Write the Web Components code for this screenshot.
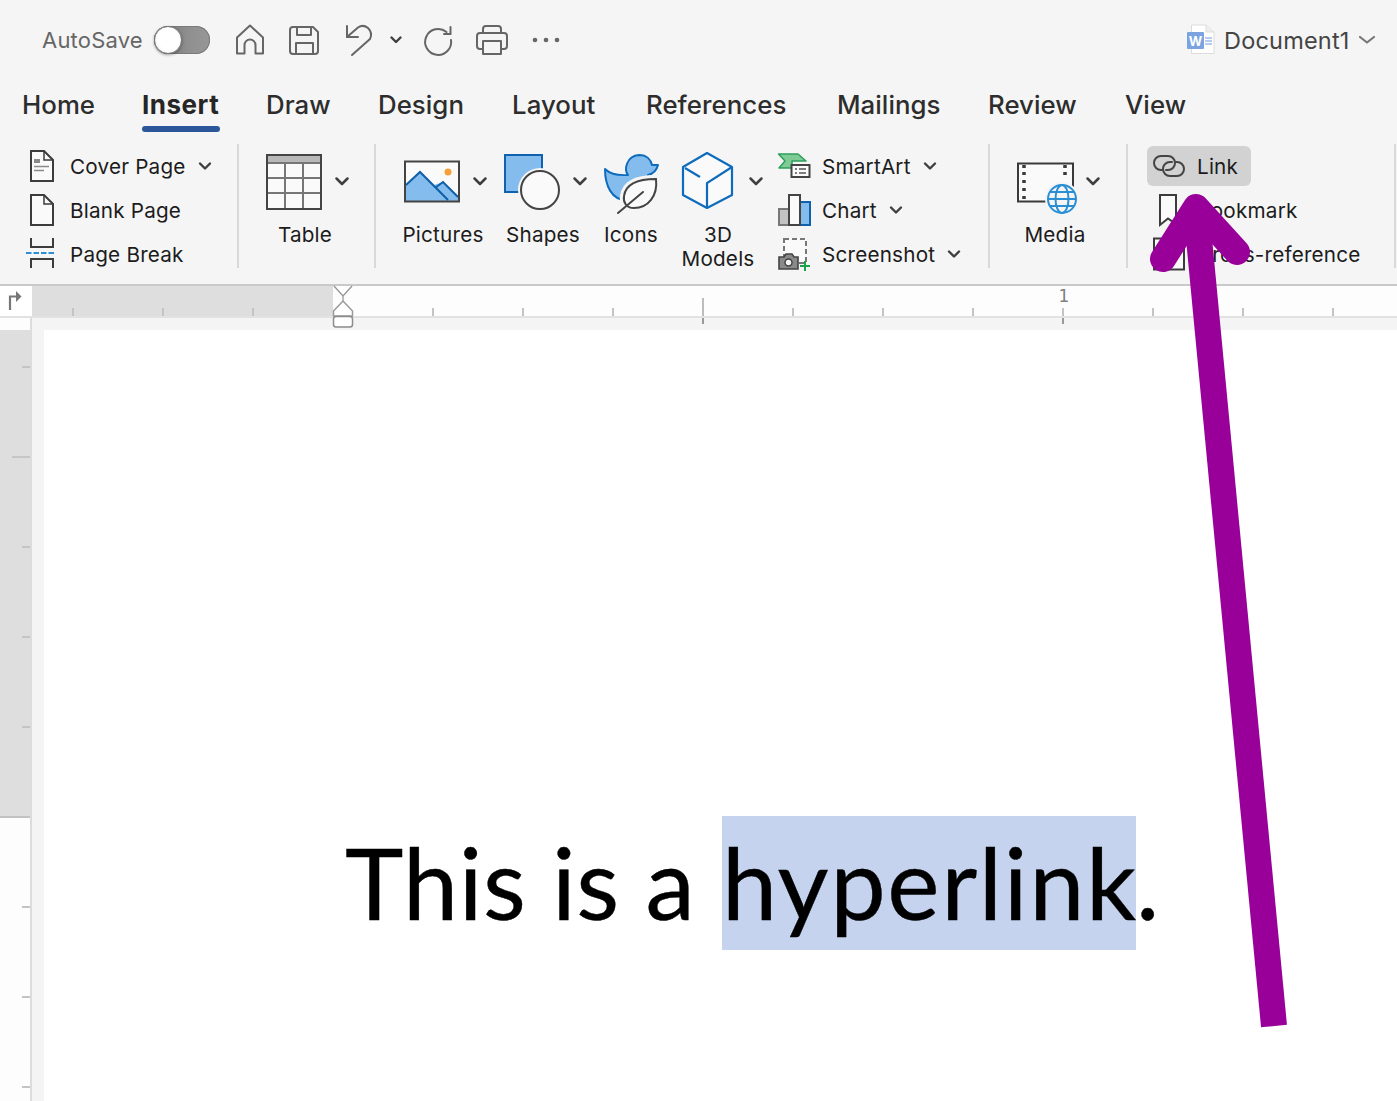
<!DOCTYPE html>
<html><head><meta charset="utf-8">
<style>
html,body{margin:0;padding:0;background:#fff}
body{width:1397px;height:1101px;overflow:hidden;position:relative;font-family:Inter,"Liberation Sans",sans-serif}
</style></head><body>
<word-app>
  <title-bar></title-bar>
  <tab-strip>
    <tab-item style="width:120px">Home</tab-item>
    <tab-item active style="width:124px">Insert</tab-item>
    <tab-item style="width:112px">Draw</tab-item>
    <tab-item style="width:134px">Design</tab-item>
    <tab-item style="width:134px">Layout</tab-item>
    <tab-item style="width:191px">References</tab-item>
    <tab-item style="width:151px">Mailings</tab-item>
    <tab-item style="width:137px">Review</tab-item>
    <tab-item style="width:80px">View</tab-item>
  </tab-strip>
  <ribbon-bar>
    <ribbon-group style="width:239px;padding-left:26px">
      <small-col>
        <small-item icon="cover" chev>Cover Page</small-item>
        <small-item icon="blank">Blank Page</small-item>
        <small-item icon="pagebreak">Page Break</small-item>
      </small-col>
    </ribbon-group>
    <ribbon-group style="width:137px;padding-left:21px">
      <large-btn icon="table" iw="56" w="90" ipl="6" cm="12" chev>Table</large-btn>
    </ribbon-group>
    <ribbon-group style="width:614px;padding-left:22px">
      <large-btn icon="pictures" iw="56" w="90" ipl="6" cm="12" chev>Pictures</large-btn>
      <large-btn icon="shapes" iw="56" w="90" ipl="6" cm="12" chev style="margin-left:10px">Shapes</large-btn>
      <large-btn icon="icons" iw="56" w="66" ipl="6" style="margin-left:10px">Icons</large-btn>
      <large-btn icon="model" iw="56" w="92" ipl="8" cm="12" chev style="margin-left:8px">3D Models</large-btn>
      <small-col style="margin-left:14px">
        <small-item icon="smartart" iw="32" chev>SmartArt</small-item>
        <small-item icon="chart" iw="32" chev>Chart</small-item>
        <small-item icon="screenshot" iw="32" chev>Screenshot</small-item>
      </small-col>
    </ribbon-group>
    <ribbon-group style="width:138px;padding-left:19px">
      <large-btn icon="media" iw="60" w="92" ipl="8" cm="8" chev>Media</large-btn>
    </ribbon-group>
    <ribbon-group style="width:268px;padding-left:19px">
      <small-col>
        <small-item icon="link" iw="32" active>Link</small-item>
        <small-item icon="bookmark" iw="32" pad>Bookmark</small-item>
        <small-item icon="xref" iw="32" pad>Cross-reference</small-item>
      </small-col>
    </ribbon-group>
  </ribbon-bar>
  <top-ruler></top-ruler>
  <doc-view></doc-view>
</word-app>
<pointer-arrow></pointer-arrow>
<script>
const S='stroke-linecap="round" stroke-linejoin="round"';
const ICONS={
home:[32,32,`<path d="M3 29.5V13.5L16 1.5L29 13.5V29.5H21.5V21a5.5 5.5 0 0 0-11 0V29.5Z" fill="none" stroke="#666" stroke-width="2" ${S}/>`],
save:[32,32,`<g fill="none" stroke="#666" stroke-width="2" ${S}><path d="M5 3H25L30 8V27a3 3 0 0 1-3 3H5a3 3 0 0 1-3-3V6a3 3 0 0 1 3-3Z"/><path d="M9 3V11H23V3"/><path d="M8 30V19H25V30"/></g>`],
undo:[30,32,`<g fill="none" stroke="#666" stroke-width="2" ${S}><path d="M3 2V13H14"/><path d="M3 13L14 3.5Q19 0 24 4Q29 9 26 15L8 31"/></g>`],
chev:[14,32,`<path d="M2.5 13.5L7 18L11.5 13.5" fill="none" stroke="#3f3f3f" stroke-width="2.4" ${S}/>`],
redo:[32,32,`<g fill="none" stroke="#666" stroke-width="2" ${S}><path d="M24.500 8A13 13 0 1 0 29 16"/><path d="M28.500 3V10H22"/></g>`],
print:[34,32,`<g fill="none" stroke="#666" stroke-width="2" ${S}><path d="M8 9V5a3 3 0 0 1 3-3H23a3 3 0 0 1 3 3V9"/><path d="M8 25H5a3 3 0 0 1-3-3V12a3 3 0 0 1 3-3H29a3 3 0 0 1 3 3V22a3 3 0 0 1-3 3H26"/><path d="M8 30V17H26V30Z"/></g>`],
dots:[28,32,`<g fill="#666"><circle cx="3" cy="16" r="2.300"/><circle cx="14" cy="16" r="2.300"/><circle cx="25" cy="16" r="2.300"/></g>`],
word:[30,32,`<path d="M5.500 1H20L28 8V29.500H5.500Z" fill="#fff" stroke="#dcdcdc"/><path d="M20 1V8H28" fill="#eee" stroke="#dcdcdc"/><rect x="1" y="8" width="17" height="17" rx="1" fill="#7ba3df"/><text x="9.500" y="21.500" font-family="Inter,Liberation Sans,sans-serif" font-size="13" font-weight="700" fill="#fff" text-anchor="middle">W</text><path d="M19 14h7M19 17h7M19 20h7" stroke="#6d9ce0" stroke-width="1.200"/>`],
docchev:[18,32,`<path d="M2 13L9 18.500L16 13" fill="none" stroke="#777" stroke-width="2.200" ${S}/>`],
bigchev:[16,66,`<path d="M2.500 28.500L8 34L13.500 28.500" fill="none" stroke="#3f3f3f" stroke-width="2.500" ${S}/>`],
smallchev:[14,36,`<path d="M2 15.500L7 20.500L12 15.500" fill="none" stroke="#3f3f3f" stroke-width="2.400" ${S}/>`],
cover:[30,36,`<path d="M5 3H18L27 12V33H5Z" fill="#fafafa" stroke="#3c3c3c" stroke-width="2"/><path d="M18 3V12H27" fill="none" stroke="#3c3c3c" stroke-width="1.500"/><path d="M8 11h6v4H8z" fill="#8a8a8a"/><path d="M8 18.500H23M8 22.500H18" stroke="#8a8a8a" stroke-width="1.600"/>`],
blank:[30,36,`<path d="M5 3H18L27 12V33H5Z" fill="#fafafa" stroke="#3c3c3c" stroke-width="2"/><path d="M18 3V12H27" fill="none" stroke="#3c3c3c" stroke-width="1.500"/>`],
pagebreak:[30,36,`<path d="M5 2V11H27V2M5 32V23H27V32" fill="none" stroke="#3c3c3c" stroke-width="2"/><path d="M0 17H30" stroke="#2b8fd6" stroke-width="2" stroke-dasharray="5.500 2"/>`],
table:[56,66,`<rect x="1" y="5" width="54" height="54" fill="#fafafa"/><rect x="1" y="5" width="54" height="8" fill="#b8b8b8"/><path d="M1 13H55M1 28H55M1 43H55M19 13V59M37 13V59" stroke="#777" stroke-width="2" fill="none"/><rect x="1" y="5" width="54" height="54" fill="none" stroke="#444" stroke-width="2"/>`],
pictures:[56,66,`<rect x="1" y="11.500" width="54" height="40" fill="#fafafa"/><path d="M2 35L16 22L30 35L39 32L54 47V51H2Z" fill="#83bced"/><path d="M2 35L16 22L44 50M31 38L39 32L54 47" fill="none" stroke="#0f5fa8" stroke-width="2"/><circle cx="44" cy="22" r="3.500" fill="#f6a03c"/><rect x="1" y="11.500" width="54" height="40" fill="none" stroke="#444" stroke-width="2"/>`],
shapes:[56,66,`<rect x="1" y="5" width="37" height="37" fill="#83bced" stroke="#0f62ae" stroke-width="2"/><circle cx="36" cy="40" r="22" fill="#f5f5f5"/><circle cx="36" cy="40" r="19" fill="#fafafa" stroke="#444" stroke-width="2"/>`],
icons:[56,66,`<path d="M1 19Q8 26 24 25C20 20 22 6 35 5C43 5 47 10 48 15L54 15Q52 23 44 25C46 40 35 50 22 50C8 50 1 36 1 19Z" fill="#83bced" stroke="#0f6cbd" stroke-width="2" stroke-linejoin="round"/><path d="M52 29C38 29 22 32 20 46C19 52 22 58 30 58C44 58 54 46 52 29Z" fill="#f5f5f5" stroke="#f5f5f5" stroke-width="8"/><path d="M52 29C38 29 22 32 20 46C19 52 22 58 30 58C44 58 54 46 52 29Z" fill="#fafafa" stroke="#444" stroke-width="2"/><path d="M14 63L39 42" stroke="#444" stroke-width="2" ${S}/>`],
model:[56,66,`<path d="M27 3L52 17V45L27 58L3 45V17Z" fill="#fafafa" stroke="#0f6cbd" stroke-width="2.200" stroke-linejoin="round"/><path d="M52 17L27 33V58M5 18L20 27" fill="none" stroke="#0f6cbd" stroke-width="2.200"/>`],
smartart:[32,36,`<path d="M0.500 6H20L28 13H14V20H1L7 13Z" fill="#7fcb96" stroke="#2e9e5b" stroke-width="1.500" stroke-linejoin="round"/><rect x="13.500" y="17" width="18" height="12" fill="#fafafa" stroke="#444" stroke-width="2"/><path d="M17 21h2M21 21h7M17 25h2M21 25h7" stroke="#555" stroke-width="1.500"/>`],
chart:[32,36,`<rect x="1" y="17" width="10" height="16" fill="#c2c2c2" stroke="#777" stroke-width="2"/><rect x="22" y="10" width="10" height="23" fill="#83bced" stroke="#0f62ae" stroke-width="2"/><rect x="11" y="3" width="11" height="30" fill="#fafafa" stroke="#444" stroke-width="2"/>`],
screenshot:[32,36,`<rect x="6" y="3" width="22" height="24" fill="#fafafa" stroke="#777" stroke-width="2" stroke-dasharray="5 3"/><path d="M1 21H6L8 18H14L16 21H20V33H1Z" fill="#8a8a8a" stroke="#444" stroke-width="1.600"/><circle cx="10.500" cy="26.500" r="3.500" fill="#f5f5f5" stroke="#444" stroke-width="1.500"/><path d="M22 30H32M27 25V35" stroke="#1ba34a" stroke-width="2"/>`],
media:[60,66,`<rect x="1" y="13.500" width="55" height="38" fill="#fafafa" stroke="#3a3a3a" stroke-width="2"/><path d="M7 15v3M7 22v3M7 30v3M7 38v3M7 46v3M48 15v3M48 22v3" stroke="#3a3a3a" stroke-width="3.500"/><circle cx="45" cy="49" r="17" fill="#f5f5f5"/><g fill="none" stroke="#2b8fd6" stroke-width="2"><circle cx="45" cy="49" r="14"/><ellipse cx="45" cy="49" rx="6.500" ry="14"/><path d="M31 49H59M33 42H57M33 56H57"/></g>`],
link:[32,36,`<g fill="none" stroke="#444" stroke-width="2" ${S}><path d="M9 22H8A7 7 0 0 1 8 8H15A7 7 0 0 1 15 22H13"/><path d="M23 14H24A7 7 0 0 1 24 28H17A7 7 0 0 1 17 14H19"/></g>`],
bookmark:[32,36,`<path d="M7 3H23V32L15 26.500L7 33Z" fill="#fafafa" stroke="#3c3c3c" stroke-width="2"/>`],
xref:[32,36,`<rect x="1" y="2.500" width="30" height="31" fill="#fafafa" stroke="#3c3c3c" stroke-width="2"/>`]
};
function def(name,html){
  customElements.define(name,class extends HTMLElement{
    constructor(){super();this.attachShadow({mode:'open'});}
    connectedCallback(){
      if(this._done)return;this._done=true;
      this.shadowRoot.innerHTML=typeof html==='function'?html(this):html;
    }
  });
}
function svg(n){const i=ICONS[n];return `<svg xmlns="http://www.w3.org/2000/svg" width="${i[0]}" height="${i[1]}" viewBox="0 0 ${i[0]} ${i[1]}" style="display:block;flex:none;overflow:visible">${i[2]}</svg>`;}
def('rb-icon',el=>`<style>:host{display:block;flex:none}</style>${svg(el.getAttribute('name'))}`);

def('word-app',`<style>:host{display:flex;flex-direction:column;width:1397px;height:1101px;overflow:hidden;background:#fff}</style><slot></slot>`);

def('toggle-switch',`<style>
:host{display:block;flex:none;width:56px;height:28px;position:relative;border-radius:14px;background:linear-gradient(90deg,#6c6c6c,#8f8f8f 60%,#979797);box-shadow:inset 0 0 0 1px #7a7a7a}
i{position:absolute;left:0;top:0;width:28px;height:28px;box-sizing:border-box;border-radius:50%;background:radial-gradient(circle at 60% 45%,#fff 55%,#ececec);border:1px solid #777;box-shadow:0 1px 3px rgba(0,0,0,.35)}
</style><i></i>`);

def('title-bar',`<style>
:host{display:flex;align-items:center;height:80px;padding-left:42px;box-sizing:border-box;background:#f5f5f5;flex:none}
.as{width:112px;font-size:22px;color:#666;font-weight:400;white-space:nowrap;flex:none;letter-spacing:.2px}
.doc{font-size:23.5px;color:#444;width:134px;flex:none;margin-left:8px;white-space:nowrap;letter-spacing:.2px}
.push{flex:1}
</style>
<span class="as">AutoSave</span><toggle-switch></toggle-switch>
<rb-icon name="home" style="margin-left:24px"></rb-icon>
<rb-icon name="save" style="margin-left:22px"></rb-icon>
<rb-icon name="undo" style="margin-left:24px"></rb-icon>
<rb-icon name="chev" style="margin-left:15px"></rb-icon>
<rb-icon name="redo" style="margin-left:19px"></rb-icon>
<rb-icon name="print" style="margin-left:21px"></rb-icon>
<rb-icon name="dots" style="margin-left:23px"></rb-icon>
<span class="push"></span>
<rb-icon name="word"></rb-icon><span class="doc">Document1</span><rb-icon name="docchev" style="margin-right:21px"></rb-icon>`);

def('tab-strip',`<style>:host{display:flex;height:52px;padding-left:22px;background:#f5f5f5;flex:none;box-sizing:border-box}</style><slot></slot>`);
def('tab-item',el=>`<style>
:host{display:block;position:relative;height:52px;line-height:50px;font-size:25.800px;font-weight:500;color:#2d2d2d;white-space:nowrap;flex:none;letter-spacing:.05px}
:host([active]){font-weight:700;color:#262626;font-size:26px;letter-spacing:.5px}
.u{position:absolute;left:0;top:46px;width:78px;height:6px;border-radius:3px;background:#2b579a}
</style><slot></slot>${el.hasAttribute('active')?'<span class="u"></span>':''}`);

def('ribbon-bar',`<style>:host{display:flex;height:154px;padding-top:12px;box-sizing:border-box;background:#f5f5f5;border-bottom:2px solid #c9c9c9;flex:none}</style><slot></slot>`);
def('ribbon-group',`<style>:host{display:flex;flex:none;box-sizing:border-box;height:124px;border-right:2px solid #d9d9d9}</style><slot></slot>`);
def('small-col',`<style>:host{display:flex;flex-direction:column;flex:none}</style><slot></slot>`);
def('small-item',el=>{
  const a=el.hasAttribute('active'),iw=el.getAttribute('iw');
  return `<style>
:host{display:flex;height:44px;align-items:center;flex:none;font-size:20.700px;color:#1c1c1c;white-space:nowrap;letter-spacing:.2px}
.b{display:flex;align-items:center;height:40px;box-sizing:border-box}
.b.act{background:#d2d2d2;border-radius:6px;padding:0 13px 0 6px}
.b.pad{padding-left:6px}
.t{margin-left:${iw?12:14}px}
.c{margin-left:12px}
</style><div class="b ${a?'act':''} ${el.hasAttribute('pad')?'pad':''}">${svg(el.getAttribute('icon'))}<span class="t"><slot></slot></span>${el.hasAttribute('chev')?'<span class="c">'+svg('smallchev')+'</span>':''}</div>`});
def('large-btn',el=>`<style>
:host{display:block;flex:none;width:${el.getAttribute('w')}px;font-size:20.700px;color:#1c1c1c;letter-spacing:.2px}
.i{display:flex;height:66px;margin-top:6px;padding-left:${el.getAttribute('ipl')}px}
.c{margin-left:${el.getAttribute('cm')||0}px}
.l{margin-top:7px;line-height:24px;text-align:center}
</style><div class="i">${svg(el.getAttribute('icon'))}${el.hasAttribute('chev')?'<span class="c">'+svg('bigchev')+'</span>':''}</div><div class="l"><slot></slot></div>`);

def('top-ruler',`<style>
:host{display:flex;height:32px;flex:none;position:relative;z-index:2;background:#fff}
.corner{width:32px;flex:none;display:flex;align-items:flex-start;padding:4px 0 0 8px;box-sizing:border-box;border-bottom:2px solid #e2e2e2}
.track{flex:1;box-sizing:border-box;border-bottom:2px solid #e2e2e2;padding-top:22px;background:linear-gradient(90deg,#dedede 301px,#fdfdfd 301px)}
.ticks{height:8px;background:repeating-linear-gradient(90deg,transparent 0 40px,#c4c4c4 40px 42px,transparent 42px 90px)}
.big{position:absolute;left:702px;top:12px;width:2px;height:18px;background:#bdbdbd}
.one{position:absolute;left:1058px;top:0;width:12px;text-align:center;font:17px/20px "DejaVu Sans",sans-serif;color:#808080}
svg.m{position:absolute;left:332px;top:0;overflow:visible}
</style>
<div class="corner"><svg width="14" height="20" viewBox="0 0 14 20"><path d="M2 20V6.500H8" fill="none" stroke="#777" stroke-width="2.200"/><path d="M8 1L13.500 6.500L8 12Z" fill="#777"/></svg></div>
<div class="track"><div class="ticks"></div></div>
<span class="big"></span><span class="one">1</span>
<svg class="m" width="22" height="42" viewBox="0 0 22 42"><path d="M2 0L11 10L20 0" fill="#fff" stroke="#9a9a9a" stroke-width="1.500"/><path d="M11 10V15" stroke="#aaa" stroke-width="1.500"/><path d="M11 15L20.500 25V30H1.500V25Z" fill="#fff" stroke="#9a9a9a" stroke-width="1.500" stroke-linejoin="round"/><rect x="1.500" y="30.500" width="19" height="10.500" rx="2.500" fill="#fff" stroke="#8c8c8c" stroke-width="1.500"/></svg>`);

def('v-ruler',`<style>
:host{display:block;width:32px;flex:none;box-sizing:border-box;border-right:2px solid #dcdcdc;height:100%;
background:
 linear-gradient(#c2c2c2,#c2c2c2) 0 498px/100% 2px no-repeat,
 linear-gradient(#c6c6c6,#c6c6c6) 12px 138px/18px 2px no-repeat,
 linear-gradient(to bottom,#c4c4c4 2px,transparent 2px) 22px 48px/8px 90px repeat-y,
 linear-gradient(#dedede,#dedede) 0 12px/100% 486px no-repeat,
 #fdfdfd}
</style>`);

def('doc-page',`<style>
:host{display:block;flex:1;background:#fff;padding:486px 0 0 301px;box-sizing:border-box;white-space:nowrap;overflow:hidden;
font:99px/132px Lato,"Open Sans",sans-serif;color:#000;-webkit-text-stroke:.4px #000}
.a{letter-spacing:.45px;display:inline-block;width:377px;vertical-align:top}
</style><span class="a">This is a</span><slot></slot>`);
def('sel-text',`<style>:host{display:inline-block;background:#c5d3ee;height:134px;width:414px;box-sizing:border-box;vertical-align:top;letter-spacing:1.600px}</style><slot></slot>`);

def('doc-view',`<style>
:host{display:flex;flex:1;min-height:0}
.main{flex:1;display:flex;flex-direction:column;min-width:0;background:#f4f4f4}
.gut{height:12px;flex:none;background:repeating-linear-gradient(90deg,transparent 0 670px,#999 670px 672px,transparent 672px 1030px,#999 1030px 1032px,transparent 1032px 2000px);background-size:100% 6px;background-repeat:no-repeat}
.row{flex:1;display:flex;padding-left:12px;min-height:0}
</style>
<v-ruler></v-ruler>
<div class="main"><div class="gut"></div><div class="row"><doc-page><sel-text>hyperlink</sel-text>.</doc-page></div></div>`);

def('pointer-arrow',`<style>:host{position:absolute;left:0;top:0;width:1397px;height:1101px;pointer-events:none;z-index:5;display:block}</style>
<svg width="1397" height="1101" viewBox="0 0 1397 1101" style="display:block"><g fill="none" stroke="#990099" stroke-width="26"><path d="M1274 1026L1196 207"/><path d="M1163 259L1196 207L1237 252" stroke-linecap="round" stroke-linejoin="round"/></g></svg>`);
</script>
</body></html>
